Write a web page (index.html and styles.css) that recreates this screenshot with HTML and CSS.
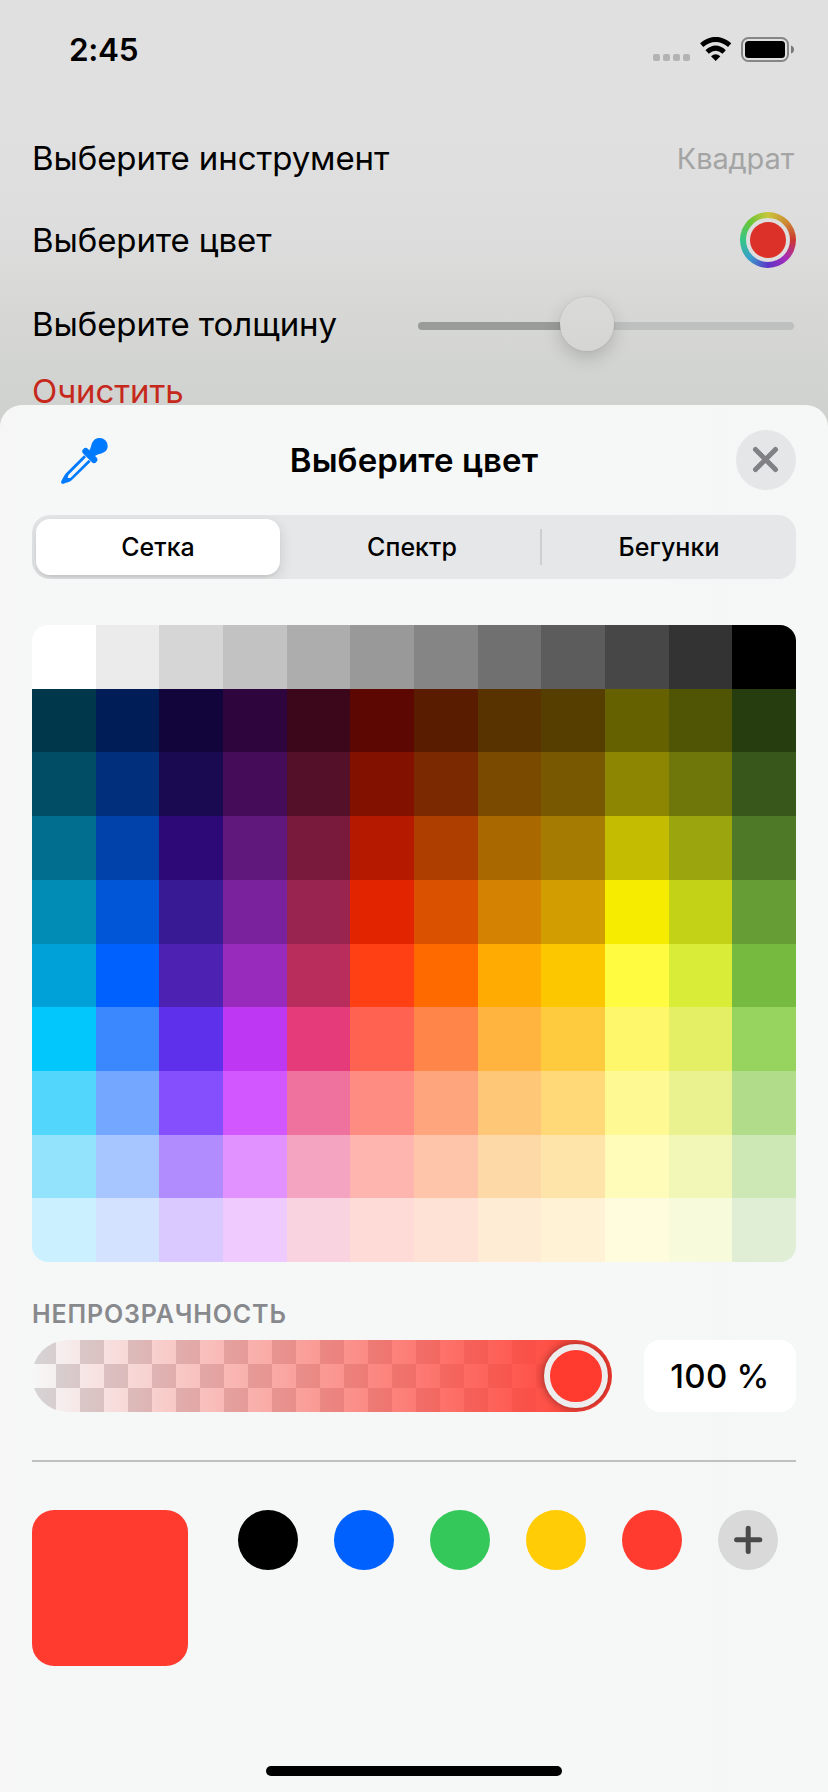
FILE: index.html
```html
<!DOCTYPE html>
<html lang="ru">
<head>
<meta charset="utf-8">
<title>Выберите цвет</title>
<link rel="stylesheet" href="styles.css">
</head>
<body>
<div class="screen">
  <header class="status">
    <span class="time">2:45</span>
    <span class="indicators">
      <span class="cells"><i></i><i></i><i></i><i></i></span>
      <svg class="wifi" viewBox="0 0 96 72"><path d="M47 72 33 58Q47 46 61 58Z"/><path d="M21.500 45Q47 22 72.500 45" class="arc"/><path d="M5 24.500Q47-10 89 24.500" class="arc"/></svg>
      <svg class="battery" viewBox="0 0 54 26"><rect x="1" y="1" width="46" height="23" rx="6.5" class="shell"/><rect x="4" y="4" width="40" height="17" rx="3.5"/><path d="M50 8.5Q53 9.500 53 12.500T50 16.500Z" class="cap"/></svg>
    </span>
  </header>
  <main class="form">
    <div class="row"><span class="label">Выберите инструмент</span><span class="value">Квадрат</span></div>
    <div class="row color"><span class="label">Выберите цвет</span><span class="well"><i></i></span></div>
    <div class="row width"><span class="label">Выберите толщину</span><span class="slider"><i class="min"></i><i class="max"></i><b class="knob"></b></span></div>
    <div class="row clear"><span class="label">Очистить</span></div>
  </main>
  <section class="sheet">
    <div class="sheet-head">
      <svg class="dropper" viewBox="0 0 147 144"><path d="M119 3C106 3 98 11 94 24 92 33 91 35 87 42L103 58C110 53 113 52 121 50 135 47 143 39 143 27A24 24 0 0 0 119 3Z"/><path d="M77 43 102 68" class="bar"/><path fill-rule="evenodd" d="M72 55 18 109C12 116 9 124 4 132 2 138 5 142 11 140 21 136 28 136 35 130L92 74ZM78 61 86 68 32 122C29 124 27 122 23 123 25 118 23 117 26 113Z"/></svg>
      <h1 class="title">Выберите цвет</h1>
      <span class="close"><svg viewBox="0 0 60 60"><path d="M19.500 19.500 39.500 39.500M39.500 19.500 19.500 39.500"/></svg></span>
    </div>
    <div class="tabs"><span class="tab active">Сетка</span><span class="tab">Спектр</span><span class="tab last">Бегунки</span></div>
    <div class="palette" id="palette"></div>
    <div class="caption">НЕПРОЗРАЧНОСТЬ</div>
    <div class="opacity"><div class="track"><i class="thumb"></i></div><div class="percent">100 %</div></div>
    <div class="saved">
      <i class="current"></i>
      <div class="dots"><i class="dot black"></i><i class="dot blue"></i><i class="dot green"></i><i class="dot yellow"></i><i class="dot red"></i><span class="dot add"><svg viewBox="0 0 60 60"><path d="M30.200 18.200V41.400M18.600 29.800H41.800"/></svg></span></div>
    </div>
    <div class="home"></div>
  </section>
</div>
<script src="palette.js"></script>
</body>
</html>
```
FILE: palette.js
```js
const rows = [
  "FFFFFF EBEBEB D6D6D6 C2C2C2 ADADAD 999999 858585 707070 5C5C5C 474747 333333 000000",
  "00374A 011D57 11053B 2E063D 3C071B 5C0701 5A1C00 583300 563D00 666100 4F5504 263E0F",
  "004D65 012F7B 1A0A52 450D59 551029 831100 7B2900 7A4A00 785800 8D8602 6F760A 38571A",
  "016E8F 0042A9 2C0977 61187C 791A3D B51A00 AD3E00 A96800 A67B01 C4BC00 9BA50E 4E7A27",
  "008CB4 0056D6 371A94 7A219E 99244F E22400 DA5100 D38301 D19D01 F5EC00 C3D117 669D34",
  "00A1D8 0061FE 4D22B2 982ABC B92D5D FF4015 FF6A00 FFAB01 FDC700 FEFB41 D9EC37 76BB40",
  "01C7FC 3A87FE 5E30EB BE38F3 E63B7A FF6250 FF8648 FEB43F FECB3E FFF76B E4EF65 96D35F",
  "52D6FC 74A7FF 864FFE D357FE EE719E FF8C82 FFA57D FEC777 FFD977 FFF994 EAF28F B1DD8B",
  "93E3FD A7C6FF B18CFE E292FE F4A4C0 FFB5AF FFC5AB FED9A8 FEE4A8 FFFBB9 F2F7B7 CDE8B5",
  "CBF0FF D3E2FF D9C9FE EFCAFF F9D3E0 FFDBD8 FFE2D6 FFECD4 FFF2D5 FEFCDD F7FADB DFEED4"
];
const palette = document.getElementById("palette");
rows.join(" ").split(" ").forEach(hex => {
  const cell = document.createElement("i");
  cell.style.background = "#" + hex;
  palette.append(cell);
});
```
FILE: styles.css
```css
* { box-sizing: border-box; }
body { margin: 0; font-family: Inter, "Liberation Sans", sans-serif; color: #000; }
i, b { display: block; }
svg { display: block; }
.screen { width: 828px; height: 1792px; overflow: hidden; display: flex; flex-direction: column; background: linear-gradient(#e0e0e0 0, #e0e0e0 130px, #dddddd 230px, #d7d8d6 310px, #d0d2cf 405px, #d0d2cf 430px); }

.status { height: 117px; flex: none; display: flex; justify-content: space-between; padding: 37px 34px 0 69px; }
.time { font-size: 31.5px; line-height: 25px; font-weight: 600; letter-spacing: -0.3px; }
.indicators { display: flex; height: 25px; }
.cells { display: flex; gap: 3px; padding-top: 17px; margin-right: 10px; }
.cells i { width: 7px; height: 7px; border-radius: 2px; background: #b3b3b3; }
.wifi { width: 32px; height: 24px; margin-right: 9px; }
.wifi .arc { fill: none; stroke: #000; stroke-width: 15; }
.battery { width: 54px; height: 26px; margin-right: -1px; }
.battery .shell { fill: none; stroke: #868686; stroke-width: 2; }
.battery .cap { fill: #777; }

.form { height: 288px; flex: none; padding: 0 32px; display: flex; flex-direction: column; }
.row { height: 82px; flex: none; display: flex; align-items: center; justify-content: space-between; }
.label { font-size: 33px; line-height: 40px; letter-spacing: -0.1px; white-space: nowrap; }
.value { font-size: 29px; letter-spacing: -0.15px; color: #a4a4a4; margin-right: 2px; }
.row.width { height: 86px; }
.row.clear { height: 48px; color: #c6281c; }
.well { width: 56px; height: 56px; border-radius: 50%; padding: 6px; background: conic-gradient(#c9c63b, #cd8b34 45deg, #cc3630 90deg, #a82cb8 135deg, #5c35c8 180deg, #389ecb 225deg, #36c687 270deg, #69c636 315deg, #c9c63b); }
.well i { width: 44px; height: 44px; border-radius: 50%; border: 4px solid #dedede; background: #dc3128; }
.slider { width: 376px; height: 54px; margin-right: 2px; display: flex; align-items: center; position: relative; padding-top: 4px; }
.slider .min { width: 169px; height: 8px; background: #9a9c99; border-radius: 4px 0 0 4px; }
.slider .max { flex: 1; height: 8px; background: #bec0bf; border-radius: 0 4px 4px 0; }
.knob { position: absolute; left: 142px; top: 0; width: 54px; height: 54px; border-radius: 50%; background: linear-gradient(#dadad9, #d5d6d4); box-shadow: 0 0 2px rgba(0,0,0,.12), 0 7px 18px rgba(0,0,0,.17); }

.sheet { flex: 1; border-radius: 22px 22px 0 0; padding: 25px 32px 0; background: linear-gradient(90deg, #f6f6f6, #f6f8f8 80px, #f6f8f8 650px, #f5f7f7 720px, #f6f8f8); display: flex; flex-direction: column; }
.sheet-head { height: 60px; flex: none; display: grid; grid-template-columns: 1fr auto 1fr; align-items: center; }
.dropper { width: 49px; height: 48px; margin: 2px 0 0 28px; fill: #007aff; }
.dropper .bar { stroke: #007aff; stroke-width: 20; stroke-linecap: round; }
.title { margin: 0; font-size: 33px; line-height: 40px; font-weight: 600; letter-spacing: 0.1px; }
.close { width: 60px; height: 60px; border-radius: 50%; background: #e5e6e8; justify-self: end; }
.close path { fill: none; stroke: #818185; stroke-width: 5; stroke-linecap: round; }
.tabs { height: 64px; flex: none; margin-top: 25px; border-radius: 18px; background: #e5e7e8; display: grid; grid-template-columns: 248px 1fr 252px; align-items: center; padding: 4px; overflow: hidden; }
.tab { height: 56px; display: flex; align-items: center; justify-content: center; font-size: 25px; font-weight: 500; letter-spacing: 0.05px; }
.tab.active { width: 244px; background: #fff; border-radius: 14px; box-shadow: 0 4px 14px rgba(0,0,0,.13), 0 2px 2px rgba(0,0,0,.05); }
.tab.last { height: 36px; border-left: 2px solid #cdcfd1; padding-left: 4px; }
.palette { height: 637px; flex: none; margin-top: 46px; border-radius: 16px; overflow: hidden; display: grid; grid-template-columns: repeat(12, 1fr); grid-template-rows: repeat(10, 1fr); }
.caption { flex: none; height: 30px; margin-top: 37px; font-size: 25px; line-height: 30px; font-weight: 600; letter-spacing: 0.85px; color: #88898d; }
.opacity { height: 122px; flex: none; margin-top: 11px; border-bottom: 2px solid #bfc1c0; display: flex; justify-content: space-between; }
.track { width: 580px; height: 72px; border-radius: 36px; overflow: hidden; display: flex; justify-content: flex-end; padding: 4px; background: linear-gradient(90deg, rgba(255,59,48,0), #ff3b30), repeating-conic-gradient(transparent 0 25%, #d6d4d6 0 50%) 0 0 / 48px 48px; }
.thumb { width: 64px; height: 64px; border-radius: 50%; border: 6px solid #ededed; background: #ff3b30; box-shadow: 0 0 10px rgba(0,0,0,.45); }
.percent { width: 152px; height: 72px; border-radius: 16px; background: #fff; display: flex; align-items: center; justify-content: center; font-size: 33px; font-weight: 500; letter-spacing: 0.3px; }
.saved { display: flex; margin-top: 48px; }
.current { width: 156px; height: 156px; border-radius: 22px; background: #ff3b30; margin-right: 50px; }
.dots { display: flex; gap: 36px; }
.dot { width: 60px; height: 60px; border-radius: 50%; }
.black { background: #000; }
.blue { background: #0061ff; }
.green { background: #34c759; }
.yellow { background: #ffcc05; }
.red { background: #ff3b30; }
.add { background: #d9d9d9; }
.add path { stroke: #4a4a4a; stroke-width: 5; stroke-linecap: round; }
.home { width: 296px; height: 10px; border-radius: 5px; background: #000; margin: auto auto 16px; }
```
